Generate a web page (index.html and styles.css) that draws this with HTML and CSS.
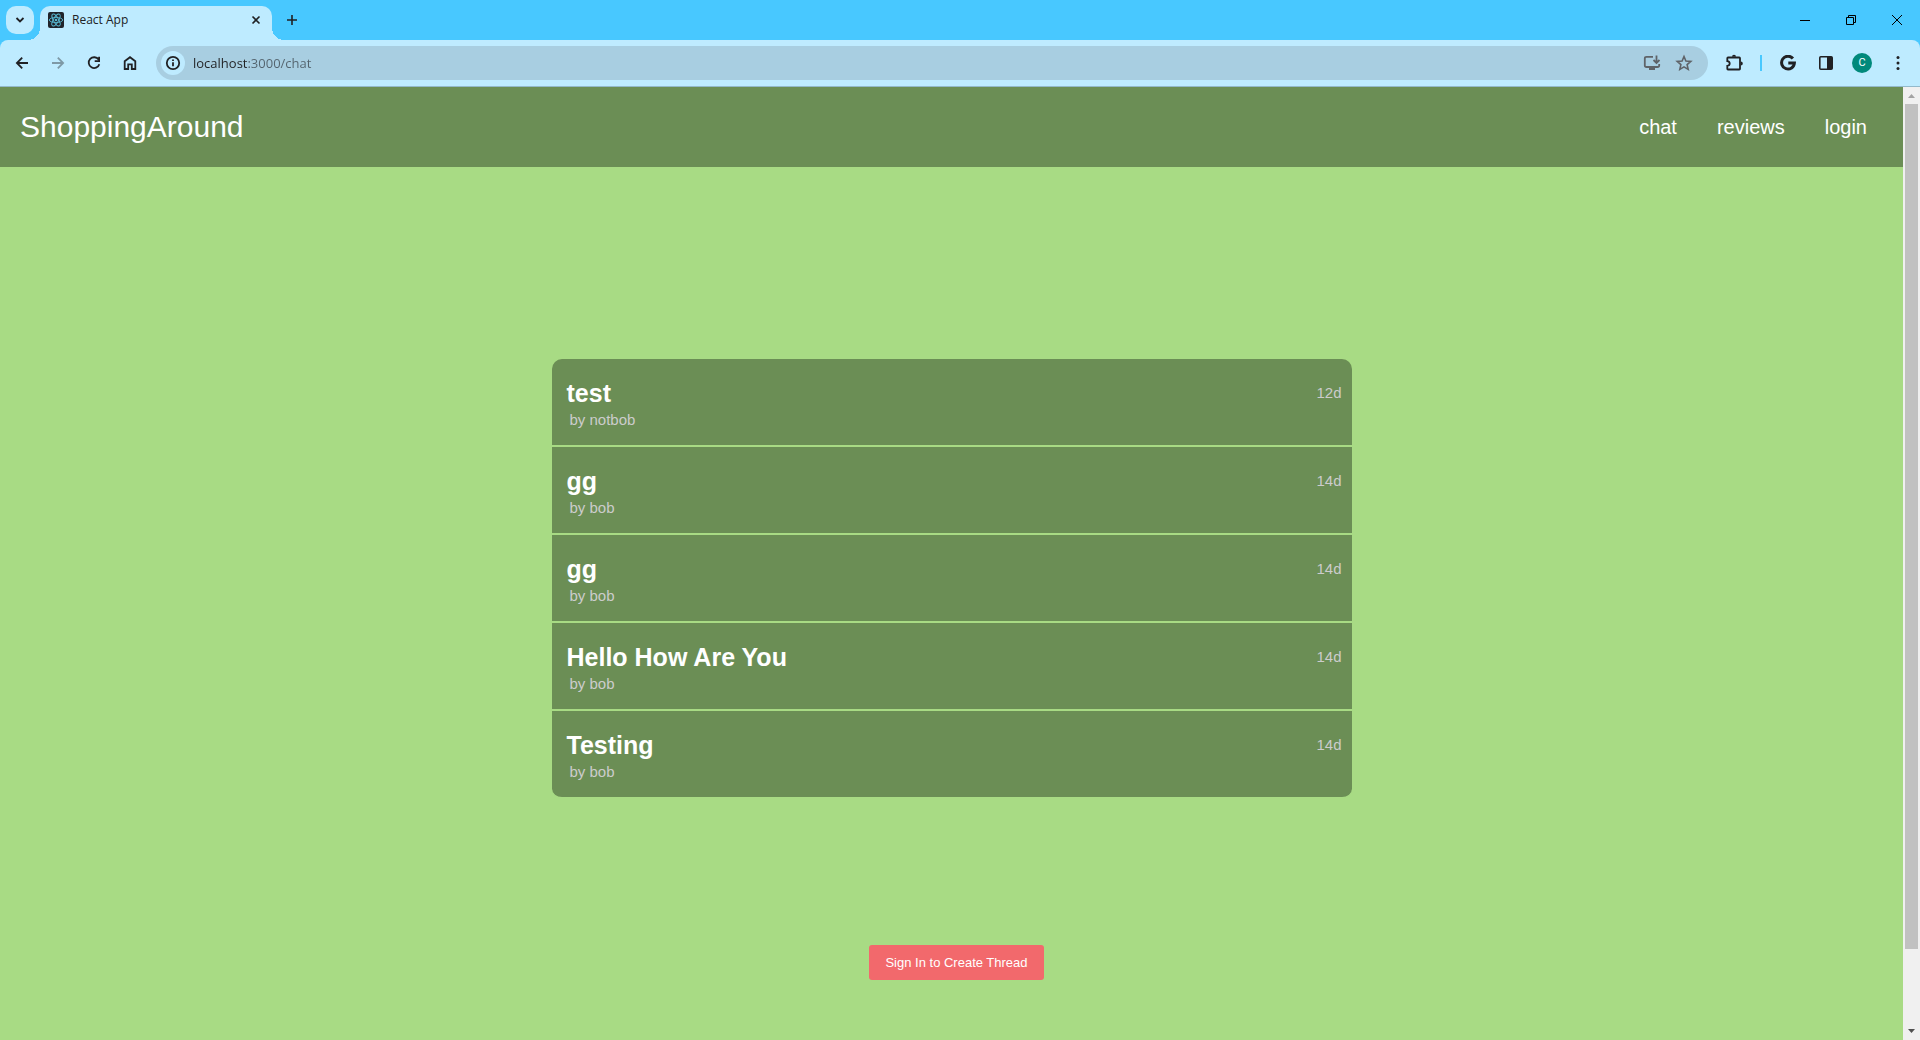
FILE: index.html
```html
<!DOCTYPE html>
<html lang="en">
<head>
<meta charset="utf-8">
<meta name="viewport" content="width=device-width, initial-scale=1">
<title>React App</title>
<link rel="stylesheet" href="styles.css">
</head>
<body>
<div class="tab-strip">
  <button class="tab-search" type="button" aria-label="Search tabs">
    <svg width="16" height="16" viewBox="0 0 16 16"><path d="M4.500 6l3.500 3.500L11.500 6" class="stroke"/></svg>
  </button>
  <div class="tab">
    <svg class="favicon" width="16" height="16" viewBox="0 0 16 16">
      <rect width="16" height="16" rx="2" fill="#20232a"/>
      <g fill="none" stroke="#58b9d2" stroke-width=".9">
        <ellipse cx="8" cy="8" rx="6.700" ry="2.600"/>
        <ellipse cx="8" cy="8" rx="6.700" ry="2.600" transform="rotate(60 8 8)"/>
        <ellipse cx="8" cy="8" rx="6.700" ry="2.600" transform="rotate(120 8 8)"/>
      </g>
      <circle cx="8" cy="8" r="1.300" fill="#58b9d2"/>
    </svg>
    <span class="tab-title">React App</span>
    <button class="tab-close" type="button" aria-label="Close tab">
      <svg width="16" height="16" viewBox="0 0 16 16"><path d="M4.500 4.500l7 7M11.500 4.500l-7 7" class="stroke thin"/></svg>
    </button>
  </div>
  <button class="new-tab" type="button" aria-label="New tab">
    <svg width="16" height="16" viewBox="0 0 16 16"><path d="M8 3v10M3 8h10" class="stroke thin"/></svg>
  </button>
  <div class="window-controls">
    <button type="button" aria-label="Minimize"><svg width="10" height="10" viewBox="0 0 10 10"><path d="M0 5.500h10" class="hair"/></svg></button>
    <button type="button" aria-label="Restore"><svg width="10" height="10" viewBox="0 0 10 10"><path d="M.5 2.500h7v7h-7zM2.500 2.500v-2h7v7h-2" class="hair"/></svg></button>
    <button type="button" aria-label="Close"><svg width="10" height="10" viewBox="0 0 10 10"><path d="M0 0l10 10M10 0L0 10" class="hair"/></svg></button>
  </div>
</div>

<div class="toolbar">
  <button class="tool" type="button" aria-label="Back"><svg width="16" height="16" viewBox="0 0 16 16"><path d="M14 8H3M8.200 2.700L2.900 8l5.300 5.300" class="stroke"/></svg></button>
  <button class="tool faded" type="button" aria-label="Forward"><svg width="16" height="16" viewBox="0 0 16 16"><path d="M2 8h11M7.800 2.700L13.100 8l-5.300 5.300" class="stroke"/></svg></button>
  <button class="tool" type="button" aria-label="Reload"><svg width="16" height="16" viewBox="0 0 16 16"><path d="M12.600 4.600A5.400 5.400 0 1 0 13.300 9.200M13.100 1.700v4.500H8.700" class="stroke"/></svg></button>
  <button class="tool" type="button" aria-label="Home"><svg width="16" height="16" viewBox="0 0 16 16"><path d="M2.700 14V6.300L8 2.200l5.300 4.100V14H9.800V9.300H6.200V14z" class="stroke"/></svg></button>
  <div class="omnibox">
    <button class="site-info" type="button" aria-label="Site information"><svg width="16" height="16" viewBox="0 0 16 16"><circle cx="8" cy="8" r="6.200" class="stroke"/><path d="M8 7.300v4M8 4.500v1.500" class="stroke"/></svg></button>
    <input class="address" type="text" aria-label="Address" value="localhost:3000/chat">
    <button class="omni-action" type="button" aria-label="Install app"><svg width="18" height="18" viewBox="0 0 18 18"><path d="M10 2.800H3.500Q1.800 2.800 1.800 4.500v7q0 1.500 1.700 1.500h11q1.700 0 1.700-1.500V10M13.500 1.500v7M10.500 6l3 3 3-3M6 15h6" class="stroke"/></svg></button>
    <button class="omni-action" type="button" aria-label="Bookmark"><svg width="18" height="18" viewBox="0 0 18 18"><path d="M9 2.500l1.900 4.500 4.900.4-3.700 3.200 1.100 4.800L9 12.900l-4.200 2.500 1.100-4.800-3.700-3.200L7.100 7z" class="stroke thin"/></svg></button>
  </div>
  <button class="tool" type="button" aria-label="Extensions"><svg width="20" height="20" viewBox="0 0 20 20"><path d="M4 4.500q-.7 0-.7.700v3q2.400.3 2.400 2.300t-2.400 2.300v3q0 .7.700.7h11.300q.7 0 .7-.7V5.200q0-.7-.7-.7z" class="stroke"/><path d="M8 3.700a2 2 0 0 1 4 0zM16.800 8.500a2 2 0 0 1 0 4z" fill="#202124"/></svg></button>
  <span class="divider"></span>
  <button class="tool" type="button" aria-label="Google"><svg width="16" height="16" viewBox="0 0 16 16"><path d="M12.900 3.500A6.400 6.400 0 1 0 14.400 8H8.300" fill="none" stroke="#202124" stroke-width="3"/></svg></button>
  <button class="tool panel" type="button" aria-label="Side panel"><svg width="16" height="16" viewBox="0 0 16 16"><rect x="1.800" y="1.800" width="12.400" height="12.400" rx="1" class="stroke thin"/><path d="M9 2h5v12H9z" fill="#202124"/></svg></button>
  <button class="tool" type="button" aria-label="Profile"><span class="avatar">C</span></button>
  <button class="tool" type="button" aria-label="Menu"><svg width="16" height="16" viewBox="0 0 16 16" fill="#202124"><circle cx="8" cy="2.500" r="1.500"/><circle cx="8" cy="8" r="1.500"/><circle cx="8" cy="13.500" r="1.500"/></svg></button>
</div>

<div class="viewport">
  <div class="page">
    <nav class="navbar">
      <a class="brand" href="#">ShoppingAround</a>
      <div class="links">
        <a href="#">chat</a>
        <a href="#">reviews</a>
        <a href="#">login</a>
      </div>
    </nav>
    <main class="content">
      <ul class="threads">
        <li class="thread"><div><h2>test</h2><p>by notbob</p></div><time>12d</time></li>
        <li class="thread"><div><h2>gg</h2><p>by bob</p></div><time>14d</time></li>
        <li class="thread"><div><h2>gg</h2><p>by bob</p></div><time>14d</time></li>
        <li class="thread"><div><h2>Hello How Are You</h2><p>by bob</p></div><time>14d</time></li>
        <li class="thread"><div><h2>Testing</h2><p>by bob</p></div><time>14d</time></li>
      </ul>
      <button class="create" type="button">Sign In to Create Thread</button>
    </main>
  </div>
  <div class="scrollbar">
    <svg width="17" height="17" viewBox="0 0 17 17"><path d="M5 11h7L8.500 7z" fill="#a3a3a3"/></svg>
    <div class="track"><div class="thumb"></div></div>
    <svg width="17" height="17" viewBox="0 0 17 17"><path d="M5 6h7L8.500 10z" fill="#505050"/></svg>
  </div>
</div>
</body>
</html>
```

FILE: styles.css
```css
* { box-sizing: border-box; }

body {
  margin: 0;
  height: 100vh;
  display: flex;
  flex-direction: column;
  overflow: hidden;
  background: #48c8ff;
  font-family: "Liberation Sans", Arial, sans-serif;
}

button {
  display: flex;
  align-items: center;
  justify-content: center;
  padding: 0;
  border: 0;
  background: none;
  font-family: inherit;
}

svg { display: block; }
.stroke { fill: none; stroke: #202124; stroke-width: 1.800; }
.stroke.thin { stroke-width: 1.600; }
.hair { fill: none; stroke: #000; stroke-width: 1; }

/* Tab strip */
.tab-strip {
  display: flex;
  flex: none;
  height: 40px;
  padding: 6px 0 0 6px;
}
.tab-search {
  width: 28px;
  height: 28px;
  border-radius: 10px;
  background: #beebff;
}
.tab {
  position: relative;
  display: flex;
  align-items: center;
  width: 232px;
  margin-left: 6px;
  padding: 0 8px 6px;
  border-radius: 10px 10px 0 0;
  background: #beebff;
}
.tab::before,
.tab::after {
  content: "";
  position: absolute;
  bottom: 0;
  width: 12px;
  height: 12px;
}
.tab::before {
  right: 100%;
  background: radial-gradient(circle at 0 0, transparent 12px, #beebff 12px);
}
.tab::after {
  left: 100%;
  background: radial-gradient(circle at 100% 0, transparent 12px, #beebff 12px);
}
.tab-title {
  flex: 1;
  margin-left: 8px;
  color: #202124;
  font: 12px/16px "Open Sans", "Noto Sans", sans-serif;
}
.new-tab {
  width: 28px;
  height: 28px;
  margin-left: 6px;
}
.window-controls {
  display: flex;
  margin: -6px 0 0 auto;
}
.window-controls button {
  width: 46px;
  height: 40px;
}

/* Toolbar */
.toolbar {
  display: flex;
  flex: none;
  align-items: center;
  height: 47px;
  padding: 0 4px;
  border-bottom: 1px solid #93b9cb;
  border-radius: 8px 8px 0 0;
  background: #beebff;
}
.tool {
  flex: none;
  width: 36px;
  height: 34px;
}
.faded { opacity: .4; }
.omnibox {
  display: flex;
  flex: 1;
  align-items: center;
  height: 34px;
  margin: 0 8px;
  padding: 0 8px 0 5px;
  border-radius: 17px;
  background: #a8cee1;
}
.site-info {
  width: 24px;
  height: 24px;
  border-radius: 50%;
  background: #beebff;
}
.address {
  flex: 1;
  min-width: 0;
  margin-left: 8px;
  padding: 0;
  border: 0;
  outline: 0;
  background: linear-gradient(90deg, #202124 55px, #53636d 55px);
  background-clip: text;
  -webkit-background-clip: text;
  color: transparent;
  font: 13px/20px "Open Sans", "Noto Sans", sans-serif;
}
.omni-action {
  width: 32px;
  height: 32px;
}
.omni-action .stroke { stroke: #5f6368; }
.divider {
  flex: none;
  width: 2px;
  height: 16px;
  margin: 0 8px;
  background: #48c8ff;
}
.panel { margin-left: 2px; }
.avatar {
  width: 20px;
  height: 20px;
  border-radius: 50%;
  background: #00897b;
  color: #fff;
  font: 11px/20px Roboto, sans-serif;
}

/* Page */
.viewport {
  display: flex;
  flex: 1;
  min-height: 0;
}
.page {
  flex: 1;
  overflow: hidden;
  background: #a8db84;
}
.navbar {
  display: flex;
  align-items: center;
  justify-content: space-between;
  height: 80px;
  padding: 0 36px 0 20px;
  background: #6b8e55;
}
.navbar a {
  color: #fff;
  text-decoration: none;
}
.brand { font-size: 30px; }
.links {
  display: flex;
  gap: 40px;
  font-size: 20px;
}
.content {
  display: flex;
  flex-direction: column;
  align-items: center;
  gap: 146px;
  padding: 192px 0 120px;
}
.threads {
  width: 100%;
  max-width: 800px;
  margin: 0;
  padding: 0;
  list-style: none;
}
.thread {
  display: flex;
  justify-content: space-between;
  height: 88px;
  padding: 20px 10px 0 15px;
  border-bottom: 2px solid #a8db84;
  background: #6b8e55;
}
.thread:first-child { border-radius: 10px 10px 0 0; }
.thread:last-child { border-radius: 0 0 10px 10px; }
.thread h2 {
  margin: 0;
  color: #fff;
  font-size: 25px;
  line-height: 28px;
}
.thread p {
  margin: 4px 0 0 3px;
}
.thread p,
.thread time {
  color: #ccc;
  font-size: 15px;
  line-height: 18px;
}
.thread time { margin-top: 5px; }
.create {
  height: 35px;
  margin-left: 10px;
  padding: 0 16px;
  border-radius: 3px;
  background: #f2696c;
  color: #fff;
  font-size: 13px;
}

/* Scrollbar */
.scrollbar {
  display: flex;
  flex: none;
  flex-direction: column;
  width: 17px;
  background: #f0f0f0;
}
.track {
  flex: 1;
  padding: 0 2px;
}
.thumb {
  height: 92%;
  background: #c1c1c1;
}
```
